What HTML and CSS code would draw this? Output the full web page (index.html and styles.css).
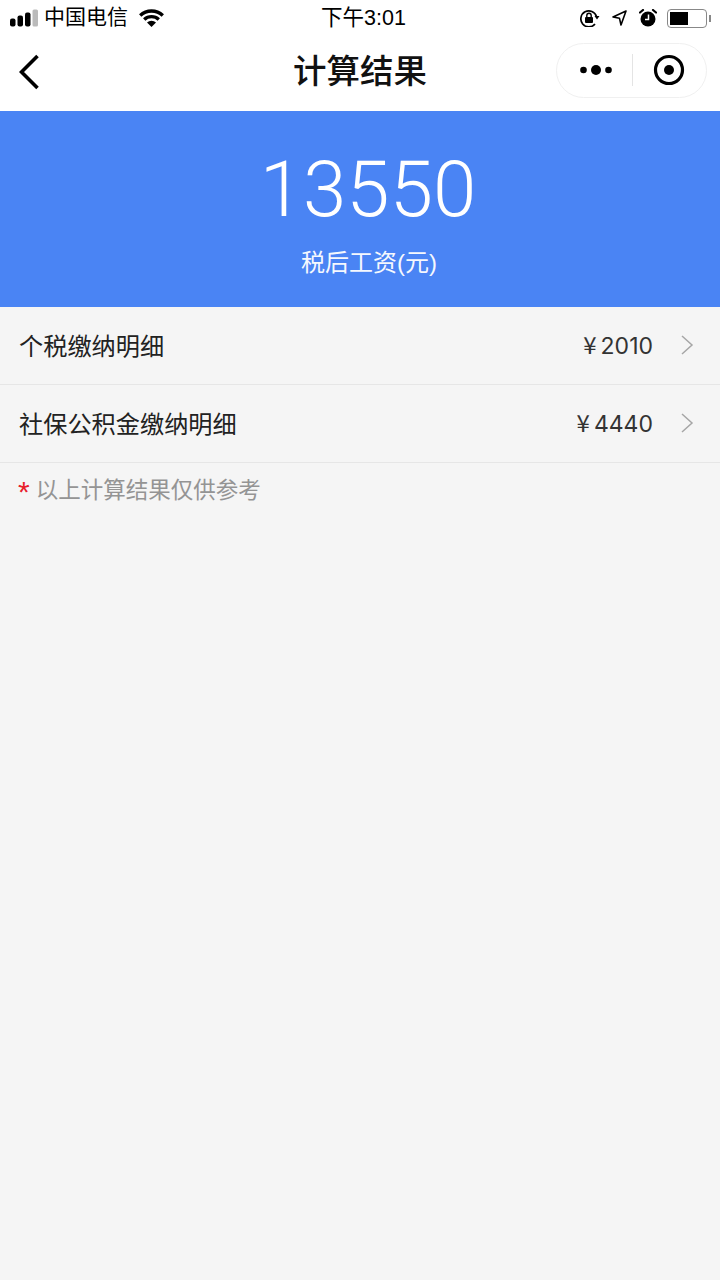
FILE: index.html
```html
<!DOCTYPE html>
<html>
<head>
    <meta charset="UTF-8">
    <title>计算结果</title>
    <link rel="stylesheet" href="styles.css">
</head>
<body>
    <!-- 状态栏 -->
    <div class="status-bar">
        <div class="status-left">
            <svg class="signal" width="28" height="18" viewBox="0 0 28 18">
                <rect x="0" y="9.500" width="5.500" height="8" rx="2" fill="#000"/>
                <rect x="7.500" y="6.500" width="5.500" height="11" rx="2" fill="#000"/>
                <rect x="15" y="3.500" width="5.500" height="14" rx="2" fill="#000"/>
                <rect x="22.500" y="0.500" width="5.500" height="17" rx="1.500" fill="#bbb"/>
            </svg>
            <span class="carrier">中国电信</span>
            <svg class="wifi" width="25" height="18" viewBox="0 0 25 18">
                <path d="M1.200 6.500 A16.500 16.500 0 0 1 23.800 6.500" fill="none" stroke="#000" stroke-width="3.400"/>
                <path d="M5.200 10.500 A10.800 10.800 0 0 1 19.800 10.500" fill="none" stroke="#000" stroke-width="3.400"/>
                <path d="M8 13.500 A6.500 6.500 0 0 1 17 13.500 L12.500 18 Z" fill="#000"/>
            </svg>
        </div>
        <div class="status-time">下午3:01</div>
        <div class="status-right">
            <svg class="icon-lock" width="20" height="18" viewBox="0 0 20 18">
                <path d="M15 15 A8 8 0 1 1 16.500 7.500" fill="none" stroke="#000" stroke-width="1.700"/>
                <path d="M14.500 7 L19.500 7 L17 10.500 Z" fill="#000"/>
                <rect x="5" y="8" width="8" height="6" rx="1" fill="#000"/>
                <path d="M6.800 8 V6.500 A2.200 2.200 0 0 1 11.200 6.500 V8" fill="none" stroke="#000" stroke-width="1.400"/>
            </svg>
            <svg class="icon-loc" width="15" height="16" viewBox="0 0 15 16">
                <path d="M14 1 L1 7 L7.500 8.300 L9 15 Z" fill="none" stroke="#000" stroke-width="1.600" stroke-linejoin="round"/>
            </svg>
            <svg class="icon-alarm" width="18" height="18" viewBox="0 0 18 18">
                <circle cx="9" cy="10" r="7.500" fill="#000"/>
                <path d="M9.500 5.500 V10.500 H6" fill="none" stroke="#fff" stroke-width="1.500"/>
                <path d="M1 3.500 L4 1 M17 3.500 L14 1" stroke="#000" stroke-width="2.200" stroke-linecap="round"/>
            </svg>
            <div class="battery">
                <div class="battery-box"><div class="battery-level"></div></div>
                <div class="battery-tip"></div>
            </div>
        </div>
    </div>

    <!-- 导航栏 -->
    <div class="nav-bar">
        <svg class="nav-back" width="20" height="36" viewBox="0 0 20 36">
            <path d="M18.500 2 L2.500 18 L18.500 34" fill="none" stroke="#000" stroke-width="3.600"/>
        </svg>
        <div class="nav-title">计算结果</div>
        <div class="capsule">
            <svg width="34" height="12" viewBox="0 0 34 12">
                <circle cx="3.500" cy="6" r="3.300" fill="#000"/>
                <circle cx="16" cy="6" r="5" fill="#000"/>
                <circle cx="28.500" cy="6" r="3.300" fill="#000"/>
            </svg>
            <div class="capsule-line"></div>
            <svg width="32" height="32" viewBox="0 0 32 32">
                <circle cx="16" cy="16" r="13.500" fill="none" stroke="#000" stroke-width="3.200"/>
                <circle cx="16" cy="16" r="5" fill="#000"/>
            </svg>
        </div>
    </div>

    <!-- 结果 -->
    <div class="result">
        <div class="result-num">13550</div>
        <div class="result-label">税后工资(元)</div>
    </div>

    <div class="row">
        <span class="row-name">个税缴纳明细</span>
        <span class="row-value"><span class="yen">¥</span>2010</span>
        <svg class="arrow" width="14" height="22" viewBox="0 0 14 22">
            <path d="M2 2 L12 11 L2 20" fill="none" stroke="#a6a6a6" stroke-width="1.500"/>
        </svg>
    </div>
    <div class="row">
        <span class="row-name">社保公积金缴纳明细</span>
        <span class="row-value"><span class="yen">¥</span>4440</span>
        <svg class="arrow" width="14" height="22" viewBox="0 0 14 22">
            <path d="M2 2 L12 11 L2 20" fill="none" stroke="#a6a6a6" stroke-width="1.500"/>
        </svg>
    </div>

    <div class="note"><span class="star">*</span>以上计算结果仅供参考</div>
</body>
</html>
```

FILE: styles.css
```css
* { margin: 0; padding: 0; box-sizing: border-box; }

body {
    width: 720px;
    height: 1280px;
    overflow: hidden;
    background: #f5f5f5;
    color: #222;
    font-family: "Liberation Sans", "Noto Sans CJK SC", sans-serif;
}

/* 状态栏 */
.status-bar {
    height: 36px;
    background: #fff;
    display: flex;
    align-items: center;
    justify-content: space-between;
    padding: 0 9px 0 10px;
    position: relative;
    color: #000;
}

.status-left {
    display: flex;
    align-items: center;
}

.signal { margin-right: 6px; }

.carrier {
    font-size: 21px;
    line-height: 36px;
    margin-top: -3px;
    margin-right: 11px;
}

.status-time {
    position: absolute;
    left: 321px;
    top: 5px;
    font-size: 21.500px;
    line-height: 26px;
}

.status-right {
    display: flex;
    align-items: center;
}

.icon-lock { margin-right: 12px; }
.icon-loc { margin-right: 12px; }
.icon-alarm { margin-right: 10px; }

.battery {
    display: flex;
    align-items: center;
}

.battery-box {
    width: 40px;
    height: 19px;
    border: 1.500px solid #888;
    border-radius: 4px;
    padding: 2px;
}

.battery-level {
    width: 18px;
    height: 100%;
    background: #000;
}

.battery-tip {
    width: 2px;
    height: 7px;
    background: #888;
    margin-left: 2px;
}

/* 导航栏 */
.nav-bar {
    height: 75px;
    background: #fff;
    display: flex;
    align-items: center;
    position: relative;
    padding: 0 13px 7px 19px;
    justify-content: space-between;
}

.nav-back { margin-top: 4px; }

.nav-title {
    position: absolute;
    left: 0;
    right: 0;
    top: 14px;
    text-align: center;
    font-size: 33.500px;
    line-height: 44px;
    font-weight: 500;
    color: #111;
}

.capsule {
    width: 151px;
    height: 55px;
    border: 1px solid #f0f0f0;
    border-radius: 28px;
    display: flex;
    align-items: center;
    justify-content: space-between;
    padding: 0 21px 0 23px;
}

.capsule-line {
    width: 1px;
    height: 32px;
    margin-left: -2px;
    background: #e4e4e4;
}

/* 结果 */
.result {
    height: 196px;
    background: #4a84f4;
    color: #fff;
    text-align: center;
    padding-top: 33px;
}

.result-num {
    font-family: Roboto, sans-serif;
    font-weight: 300;
    font-size: 78px;
    line-height: 92px;
    margin-left: 16px;
}

.result-label {
    font-size: 24px;
    line-height: 30px;
    margin-top: 12px;
    margin-left: 18px;
    opacity: 0.95;
}

/* 明细 */
.row {
    height: 78px;
    display: flex;
    align-items: center;
    padding: 0 26px 2px 19px;
    border-bottom: 1px solid #e6e6e6;
}

.row-name {
    font-size: 24.200px;
    flex: 1;
}

.row-value {
    font-family: Inter, "Liberation Sans", sans-serif;
    font-size: 23px;
    color: #333;
    margin-right: 27px;
    margin-top: -2px;
}

.yen {
    font-family: "Noto Sans CJK SC", sans-serif;
    font-size: 24px;
    margin-right: 4px;
}

.note {
    font-size: 22.500px;
    color: #949494;
    padding: 13px 0 0 18px;
    line-height: 30px;
}

.star {
    font-size: 30px;
    line-height: 0;
    vertical-align: -4px;
    color: #e8202a;
    margin-right: 6px;
}
```
